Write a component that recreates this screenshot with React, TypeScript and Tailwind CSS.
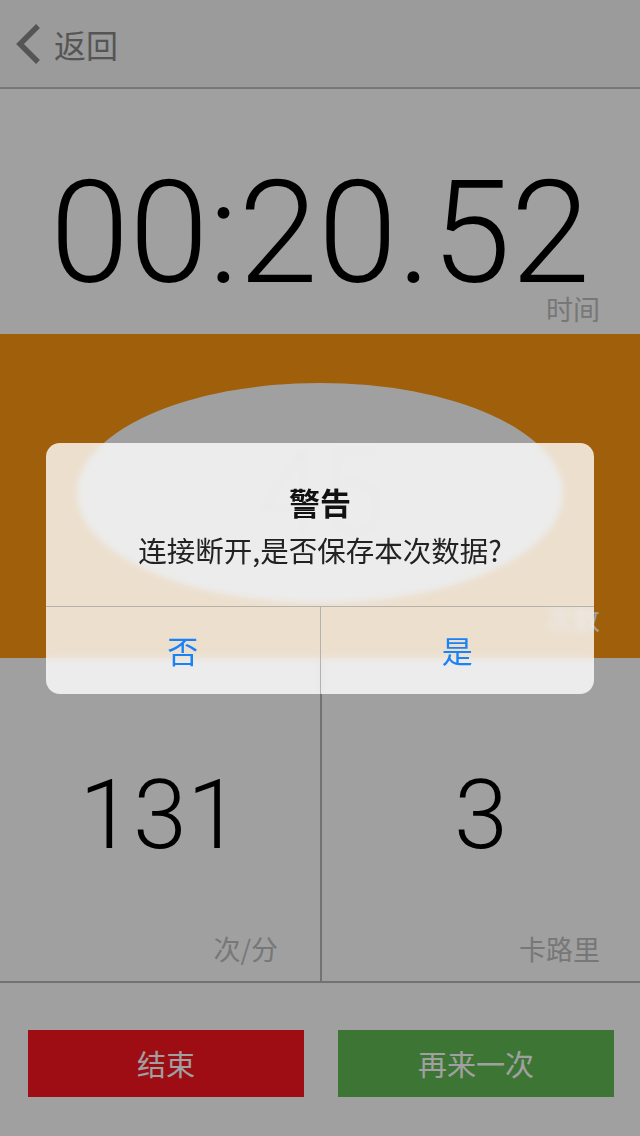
import React from "react";

const num = { fontFamily: "Roboto, 'Liberation Sans', sans-serif" };
const cjk = { fontFamily: "'Noto Sans CJK SC', 'Noto Sans', sans-serif" };

export default function App() {
  return (
    <div className="relative w-[640px] h-[1136px] overflow-hidden bg-white" style={cjk}>
      {/* Header */}
      <div className="h-[89px] bg-[#f7f7f7] border-b-2 border-[#bebebe] flex items-center pl-[14px] gap-[12px]">
        <svg width="28" height="42" viewBox="0 0 28 42">
          <polyline points="24,3 6,21 24,39" fill="none" stroke="#888888" strokeWidth="5.5" />
        </svg>
        <span className="text-[32px] leading-none text-[#888888]">返回</span>
      </div>

      {/* Time */}
      <div className="h-[245px] flex flex-col items-center">
        <div className="mt-[84px] text-[143px] leading-[120px] font-light text-black" style={num}>
          00:20.52
        </div>
        <div className="self-end mr-[40px] mt-[2px] text-[27px] leading-none text-[#bebebe]">时间</div>
      </div>

      {/* Count */}
      <div className="h-[324px] bg-[#ff9913] flex flex-col items-center">
        <div className="mt-[49px] w-[486px] h-[220px] rounded-[50%] bg-white flex items-center justify-center">
          <span className="text-[116px] leading-none font-thin text-[#e2e2e2]" style={num}>45</span>
        </div>
        <div className="self-end mr-[40px] mt-[2px] text-[27px] leading-none text-white">次数</div>
      </div>

      {/* Stats */}
      <div className="h-[325px] flex border-b-2 border-[#b6b6b6]">
        <div className="w-[322px] border-r-2 border-[#b6b6b6] flex flex-col items-center">
          <div className="mt-[109px] text-[97px] leading-none font-light text-black" style={num}>131</div>
          <div className="mt-auto mb-[19px] self-end mr-[42px] text-[27px] leading-none text-[#bebebe]">次/分</div>
        </div>
        <div className="flex-1 flex flex-col items-center">
          <div className="mt-[109px] text-[97px] leading-none font-light text-black" style={num}>3</div>
          <div className="mt-auto mb-[19px] self-end mr-[40px] text-[27px] leading-none text-[#bebebe]">卡路里</div>
        </div>
      </div>

      {/* Buttons */}
      <div className="flex gap-[34px] pl-[28px] pt-[47px]">
        <div className="w-[276px] h-[67px] bg-[#fc1521] flex items-center justify-center text-[29px] text-white">结束</div>
        <div className="w-[276px] h-[67px] bg-[#61bb53] flex items-center justify-center text-[29px] text-white">再来一次</div>
      </div>

      {/* Dim overlay */}
      <div className="absolute inset-0 bg-[rgba(0,0,0,0.373)]" />

      {/* Alert */}
      <div className="absolute left-[46px] top-[443px] w-[548px] h-[251px] rounded-[14px] overflow-hidden bg-white/80 backdrop-blur-[3px] flex flex-col">
        <div className="h-[163px] flex flex-col items-center">
          <div className="mt-[43px] text-[31px] leading-none font-bold text-[#111111]">警告</div>
          <div className="mt-[19px] text-[28.5px] leading-none text-[#222222]">连接断开,是否保存本次数据?</div>
        </div>
        <div className="h-px bg-[#b5b1ab]" />
        <div className="flex-1 flex">
          <div className="flex-1 flex items-center justify-center text-[31px] text-[#1a82f7]">否</div>
          <div className="w-px bg-[#b5b1ab]" />
          <div className="flex-1 flex items-center justify-center text-[31px] text-[#1a82f7]">是</div>
        </div>
      </div>
    </div>
  );
}
